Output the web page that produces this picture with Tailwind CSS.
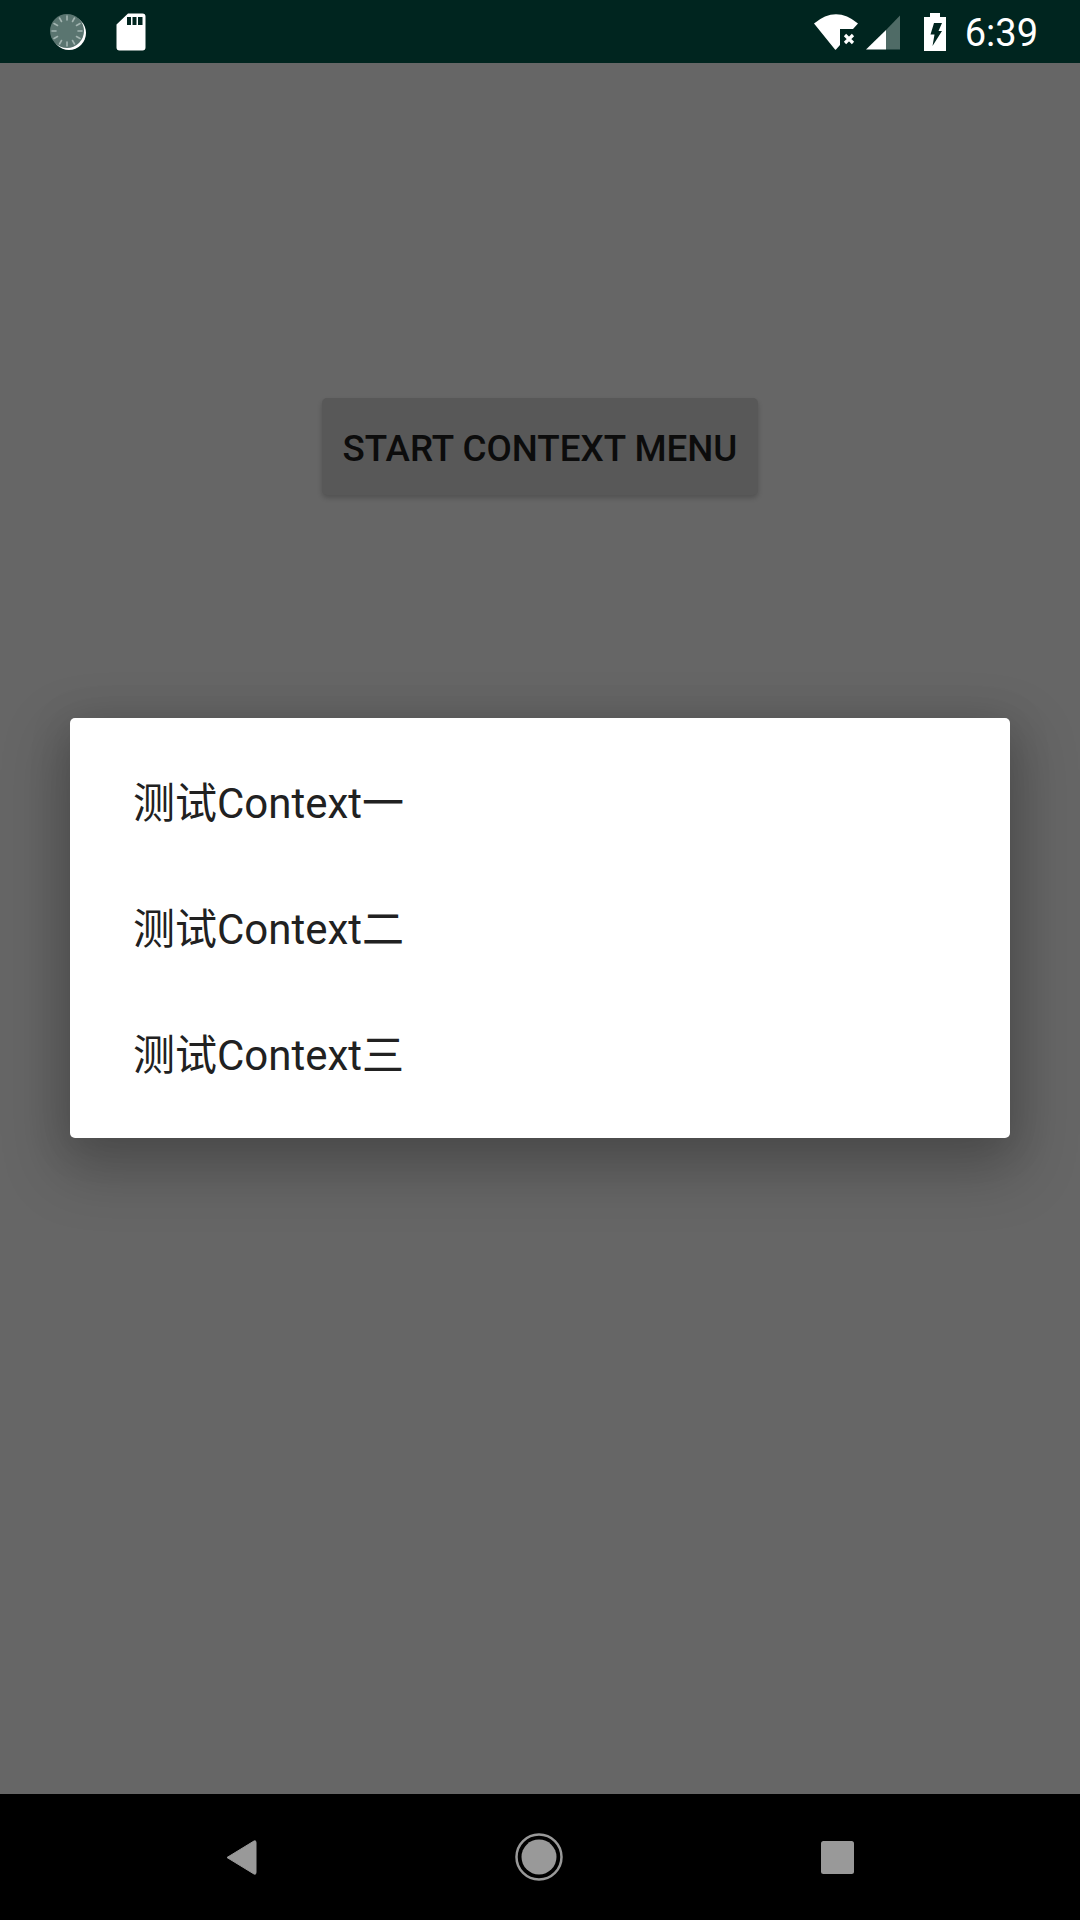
<!DOCTYPE html>
<html lang="zh">
<head>
  <meta charset="UTF-8" />
  <meta name="viewport" content="width=device-width, initial-scale=1.0"/>
  <title>Context Menu</title>
  <script src="https://cdn.jsdelivr.net/npm/@tailwindcss/browser@4"></script>
</head>
<body class="w-[1080px] h-[1920px] flex flex-col overflow-hidden bg-[#666666] font-['Roboto','Noto_Sans_CJK_SC',sans-serif]">

  <!-- Status bar -->
  <div class="h-[63px] shrink-0 bg-[#00251f] flex items-center justify-between pl-[49px] pr-[42px]">
    <div class="flex items-center gap-[29px]">
      <svg width="38" height="38" viewBox="0 0 38 38">
        <circle cx="20" cy="20" r="17" fill="#ffffff"/>
        <circle cx="18" cy="18" r="17" fill="#5a7570"/>
        <g stroke="#a3b5b1" stroke-width="1.6" stroke-linecap="round">
          <line x1="18" y1="3" x2="18" y2="7"/>
          <line x1="25.5" y1="5" x2="23.5" y2="8.5"/>
          <line x1="31" y1="10.5" x2="27.5" y2="12.5"/>
          <line x1="33" y1="18" x2="29" y2="18"/>
          <line x1="31" y1="25.5" x2="27.5" y2="23.5"/>
          <line x1="25.5" y1="31" x2="23.5" y2="27.5"/>
          <line x1="18" y1="33" x2="18" y2="29"/>
          <line x1="10.5" y1="31" x2="12.5" y2="27.5"/>
          <line x1="5" y1="25.5" x2="8.5" y2="23.5"/>
          <line x1="3" y1="18" x2="7" y2="18"/>
          <line x1="5" y1="10.5" x2="8.5" y2="12.5"/>
          <line x1="10.5" y1="5" x2="12.5" y2="8.5"/>
        </g>
      </svg>
      <svg width="30" height="38" viewBox="0 0 30 38">
        <path d="M12 0.5H26.5A3 3 0 0 1 29.5 3.5V34.5A3 3 0 0 1 26.5 37.5H3.5A3 3 0 0 1 0.5 34.5V11.5Z" fill="#ffffff"/>
        <rect x="11" y="4" width="4" height="8" fill="#00251f"/>
        <rect x="16.5" y="4" width="4" height="8" fill="#00251f"/>
        <rect x="22" y="4" width="4.5" height="8" fill="#00251f"/>
      </svg>
    </div>
    <div class="flex items-center">
      <svg width="88" height="40" viewBox="0 0 88 40" class="mr-[23px]">
        <path d="M1 11.5Q23 -7 45 11.5L40 17H27V33L23 37.5Q22.500 38 22 37.500Z" fill="#ffffff"/>
        <path d="M32 23L40 31M40 23L32 31" stroke="#ffffff" stroke-width="3.200"/>
        <path d="M53 37.500L73 18V37.500Z" fill="#ffffff"/>
        <path d="M73 18L87 3.500V37.500H73Z" fill="#4f6b66"/>
      </svg>
      <svg width="22" height="38" viewBox="0 0 22 38" class="mr-[19px]">
        <path d="M6 0H16V4H22V38H0V4H6Z" fill="#ffffff"/>
        <path d="M10 10H18L14.500 18H18L8.500 33L10.500 21.500H6.500Z" fill="#00251f"/>
      </svg>
      <span class="text-[38px] leading-[40px] pt-[3px] text-white">6:39</span>
    </div>
  </div>

  <!-- Content, dimmed by the dialog -->
  <div class="relative flex-1 flex justify-center items-start pt-[335px] bg-[#666666]">
    <button class="w-[436px] h-[97px] pt-[5px] rounded-[5px] bg-[#585858] shadow-[0_3px_5px_rgba(0,0,0,0.2)] flex items-center justify-center text-[36.750px] font-medium text-[#0c0c0c]">START CONTEXT MENU</button>

    <!-- Context menu dialog -->
    <div class="absolute left-[70px] top-[655px] w-[940px] h-[420px] py-[21px] bg-white rounded-[5px] shadow-[0_24px_60px_10px_rgba(0,0,0,0.22),0_6px_40px_4px_rgba(0,0,0,0.10)]">
      <div class="h-[126px] flex items-center pl-[63px] pt-[2px] text-[42px] text-[#212121]">测试Context一</div>
      <div class="h-[126px] flex items-center pl-[63px] pt-[2px] text-[42px] text-[#212121]">测试Context二</div>
      <div class="h-[126px] flex items-center pl-[63px] pt-[2px] text-[42px] text-[#212121]">测试Context三</div>
    </div>
  </div>

  <!-- Navigation bar -->
  <div class="h-[126px] shrink-0 bg-black grid grid-cols-3 items-center pl-[92px] pr-[94px]">
    <div class="flex justify-center">
      <svg width="32" height="37" viewBox="0 0 32 37">
        <path d="M29 2L2 18.500L29 35Q31 36 31 33.500V3.500Q31 1 29 2Z" fill="#999999" stroke="#999999" stroke-width="1" stroke-linejoin="round"/>
      </svg>
    </div>
    <div class="flex justify-center">
      <svg width="48" height="48" viewBox="0 0 48 48">
        <circle cx="24" cy="24" r="22.500" fill="none" stroke="#999999" stroke-width="2.500"/>
        <circle cx="24" cy="24" r="17.500" fill="#999999"/>
      </svg>
    </div>
    <div class="flex justify-center">
      <svg width="33" height="33" viewBox="0 0 33 33">
        <rect width="33" height="33" rx="2.500" fill="#999999"/>
      </svg>
    </div>
  </div>

</body>
</html>
